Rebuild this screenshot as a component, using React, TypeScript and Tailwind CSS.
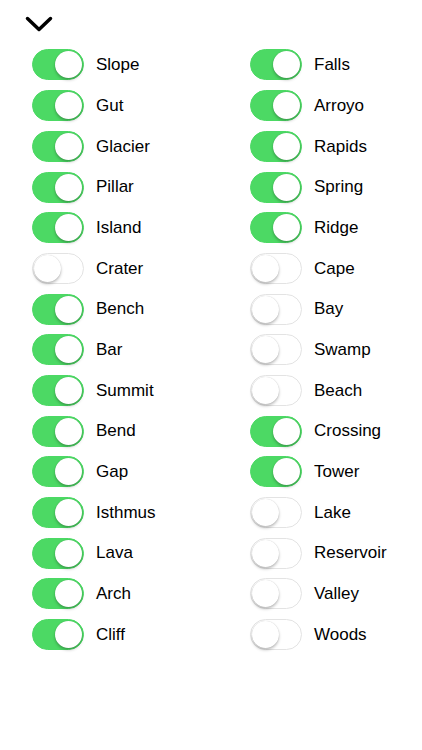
import { useState } from "react";

const left: [string, boolean][] = [
  ["Slope", true],
  ["Gut", true],
  ["Glacier", true],
  ["Pillar", true],
  ["Island", true],
  ["Crater", false],
  ["Bench", true],
  ["Bar", true],
  ["Summit", true],
  ["Bend", true],
  ["Gap", true],
  ["Isthmus", true],
  ["Lava", true],
  ["Arch", true],
  ["Cliff", true],
];

const right: [string, boolean][] = [
  ["Falls", true],
  ["Arroyo", true],
  ["Rapids", true],
  ["Spring", true],
  ["Ridge", true],
  ["Cape", false],
  ["Bay", false],
  ["Swamp", false],
  ["Beach", false],
  ["Crossing", true],
  ["Tower", true],
  ["Lake", false],
  ["Reservoir", false],
  ["Valley", false],
  ["Woods", false],
];

function Toggle({ label, initial }: { label: string; initial: boolean }) {
  const [on, setOn] = useState(initial);
  return (
    <div className="flex h-[40.7px] items-center">
      <button
        onClick={() => setOn(!on)}
        className={`relative h-[31px] w-[52px] shrink-0 rounded-full border transition-colors ${
          on ? "border-[#4cd964] bg-[#4cd964]" : "border-[#e3e3e3] bg-white"
        }`}
      >
        <span
          className={`absolute top-[1px] h-[27px] w-[27px] rounded-full bg-white shadow-[0_2px_3px_rgba(0,0,0,0.25),0_0_1px_rgba(0,0,0,0.2)] ${
            on ? "left-[22px]" : "left-[1px]"
          }`}
        />
      </button>
      <span className="ml-3 text-[17px] text-black">{label}</span>
    </div>
  );
}

export default function App() {
  return (
    <div
      className="min-h-[750px] w-[422px] bg-white"
      style={{ fontFamily: '"Liberation Sans", Arial, sans-serif' }}
    >
      <div className="pl-[25px] pt-[16px]">
        <svg width="28" height="16" viewBox="0 0 28 16" fill="none">
          <path d="M2.5 2.5 L14 13.5 L25.5 2.5" stroke="#000" strokeWidth="3.5" strokeLinecap="round" strokeLinejoin="round" />
        </svg>
      </div>
      <div className="mt-[12.6px] grid grid-cols-[218px_1fr] pl-[32px]">
        <div>
          {left.map(([name, on]) => (
            <Toggle key={name} label={name} initial={on} />
          ))}
        </div>
        <div>
          {right.map(([name, on]) => (
            <Toggle key={name} label={name} initial={on} />
          ))}
        </div>
      </div>
    </div>
  );
}
